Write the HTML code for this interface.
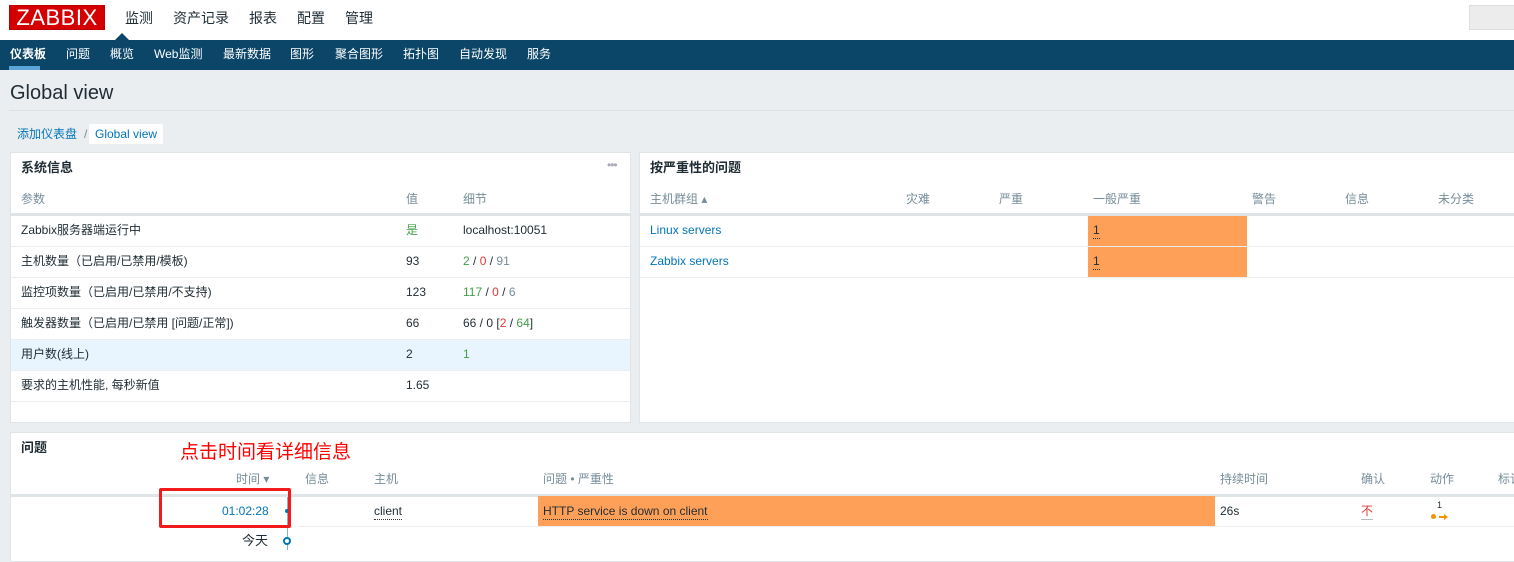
<!DOCTYPE html>
<html><head><meta charset="utf-8"><style>
*{margin:0;padding:0;box-sizing:border-box}
body{width:1514px;height:550px;overflow:hidden;background:#ebeef0;font-family:"Liberation Sans","Noto Sans CJK SC",sans-serif;font-size:12px;color:#1f2c33;position:relative}
.a{position:absolute;white-space:nowrap;line-height:16px}
.hdr{left:0;top:0;width:1514px;height:40px;background:#fff}
.nav{left:0;top:40px;width:1514px;height:30px;background:#0b4568}
.w{background:#fff;border:1px solid #dfe4e7}
.g{color:#768d99}
.l{color:#0275b8}
.hl{height:1px;background:#ebeef0}
.hl2{height:3px;background:#dfe4e7}
.grn{color:#429e47}.red{color:#e33734}
.or{background:#ffa059}
</style></head><body>
<div class="a hdr"></div>
<div class="a" style="left:9px;top:5px;width:96px;height:25px;background:#d40000;border:1px solid #b00;color:#fff;font-size:22px;line-height:24px;text-align:center;letter-spacing:0.5px">ZABBIX</div>
<div class="a" style="left:125px;top:10px;font-size:14px;color:#1f2c33">监测</div>
<div class="a" style="left:173px;top:10px;font-size:14px;color:#1f2c33">资产记录</div>
<div class="a" style="left:249px;top:10px;font-size:14px;color:#1f2c33">报表</div>
<div class="a" style="left:297px;top:10px;font-size:14px;color:#1f2c33">配置</div>
<div class="a" style="left:345px;top:10px;font-size:14px;color:#1f2c33">管理</div>
<div class="a" style="left:115px;top:33px;width:0;height:0;border-left:7px solid transparent;border-right:7px solid transparent;border-bottom:7px solid #0b4568"></div>
<div class="a" style="left:1469px;top:5px;width:50px;height:25px;background:#ececec;border:1px solid #ddd"></div>
<div class="a nav"></div>
<div class="a" style="left:10px;top:46px;color:#fff;font-weight:bold">仪表板</div>
<div class="a" style="left:9px;top:66px;width:31px;height:4px;background:#5ca4d8"></div>
<div class="a" style="left:66px;top:46px;color:#fff">问题</div>
<div class="a" style="left:110px;top:46px;color:#fff">概览</div>
<div class="a" style="left:154px;top:46px;color:#fff">Web监测</div>
<div class="a" style="left:223px;top:46px;color:#fff">最新数据</div>
<div class="a" style="left:290px;top:46px;color:#fff">图形</div>
<div class="a" style="left:335px;top:46px;color:#fff">聚合图形</div>
<div class="a" style="left:403px;top:46px;color:#fff">拓扑图</div>
<div class="a" style="left:459px;top:46px;color:#fff">自动发现</div>
<div class="a" style="left:527px;top:46px;color:#fff">服务</div>
<div class="a" style="left:10px;top:82px;font-size:20px;line-height:22px;color:#1f2c33">Global view</div>
<div class="a" style="left:9px;top:110px;width:1505px;height:1px;background:#dde1e3"></div>
<div class="a l" style="left:17px;top:126px">添加仪表盘</div>
<div class="a" style="left:84px;top:126px;color:#768d99">/</div>
<div class="a l" style="left:89px;top:124px;background:#fff;padding:2px 6px;border-radius:2px">Global view</div>

<div class="a w" style="left:10px;top:152px;width:621px;height:271px"></div>
<div class="a" style="left:21px;top:160px;font-weight:bold;font-size:13px">系统信息</div>
<div class="a" style="left:607px;top:157px;color:#aab;font-size:12px;letter-spacing:-1px">•••</div>
<div class="a g" style="left:21px;top:191px">参数</div>
<div class="a g" style="left:406px;top:191px">值</div>
<div class="a g" style="left:463px;top:191px">细节</div>
<div class="a hl2" style="left:11px;top:213px;width:619px"></div>
<div class="a" style="left:11px;top:339px;width:619px;height:31px;background:#e8f5ff"></div>
<div class="a hl" style="left:11px;top:246px;width:619px"></div>
<div class="a hl" style="left:11px;top:277px;width:619px"></div>
<div class="a hl" style="left:11px;top:308px;width:619px"></div>
<div class="a hl" style="left:11px;top:339px;width:619px"></div>
<div class="a hl" style="left:11px;top:370px;width:619px"></div>
<div class="a hl" style="left:11px;top:401px;width:619px"></div>
<div class="a" style="left:21px;top:222px">Zabbix服务器端运行中</div><div class="a grn" style="left:406px;top:222px">是</div><div class="a" style="left:463px;top:222px">localhost:10051</div>
<div class="a" style="left:21px;top:253px">主机数量（已启用/已禁用/模板)</div><div class="a" style="left:406px;top:253px">93</div><div class="a" style="left:463px;top:253px"><span class="grn">2</span> / <span class="red">0</span> / <span class="g">91</span></div>
<div class="a" style="left:21px;top:284px">监控项数量（已启用/已禁用/不支持)</div><div class="a" style="left:406px;top:284px">123</div><div class="a" style="left:463px;top:284px"><span class="grn">117</span> / <span class="red">0</span> / <span class="g">6</span></div>
<div class="a" style="left:21px;top:315px">触发器数量（已启用/已禁用 [问题/正常])</div><div class="a" style="left:406px;top:315px">66</div><div class="a" style="left:463px;top:315px">66 / 0 [<span class="red">2</span> / <span class="grn">64</span>]</div>
<div class="a" style="left:21px;top:346px">用户数(线上)</div><div class="a" style="left:406px;top:346px">2</div><div class="a grn" style="left:463px;top:346px">1</div>
<div class="a" style="left:21px;top:377px">要求的主机性能, 每秒新值</div><div class="a" style="left:406px;top:377px">1.65</div>

<div class="a w" style="left:639px;top:152px;width:880px;height:271px"></div>
<div class="a" style="left:650px;top:160px;font-weight:bold;font-size:13px">按严重性的问题</div>
<div class="a g" style="left:650px;top:191px">主机群组 ▴</div>
<div class="a g" style="left:906px;top:191px">灾难</div>
<div class="a g" style="left:999px;top:191px">严重</div>
<div class="a g" style="left:1093px;top:191px">一般严重</div>
<div class="a g" style="left:1252px;top:191px">警告</div>
<div class="a g" style="left:1345px;top:191px">信息</div>
<div class="a g" style="left:1438px;top:191px">未分类</div>
<div class="a hl2" style="left:640px;top:213px;width:874px"></div>
<div class="a or" style="left:1088px;top:216px;width:159px;height:30px"></div>
<div class="a or" style="left:1088px;top:247px;width:159px;height:30px"></div>
<div class="a hl" style="left:640px;top:246px;width:874px"></div>
<div class="a hl" style="left:640px;top:277px;width:874px"></div>
<div class="a l" style="left:650px;top:222px">Linux servers</div>
<div class="a l" style="left:650px;top:253px">Zabbix servers</div>
<div class="a" style="left:1093px;top:222px;border-bottom:1px dotted #333">1</div>
<div class="a" style="left:1093px;top:253px;border-bottom:1px dotted #333">1</div>

<div class="a w" style="left:10px;top:432px;width:1510px;height:130px"></div>
<div class="a" style="left:21px;top:440px;font-weight:bold;font-size:13px">问题</div>
<div class="a" style="left:180px;top:441px;font-size:19px;line-height:24px;color:#f00">点击时间看详细信息</div>
<div class="a g" style="left:236px;top:471px">时间 ▾</div>
<div class="a g" style="left:305px;top:471px">信息</div>
<div class="a g" style="left:374px;top:471px">主机</div>
<div class="a g" style="left:543px;top:471px">问题 • 严重性</div>
<div class="a g" style="left:1220px;top:471px">持续时间</div>
<div class="a g" style="left:1361px;top:471px">确认</div>
<div class="a g" style="left:1430px;top:471px">动作</div>
<div class="a g" style="left:1498px;top:471px">标记</div>
<div class="a hl2" style="left:11px;top:494px;width:1503px"></div>
<div class="a hl" style="left:298px;top:526px;width:1216px"></div>
<div class="a or" style="left:538px;top:496px;width:677px;height:30px"></div>
<div class="a" style="left:287px;top:497px;width:1px;height:53px;background:#7cb4dc"></div>
<div class="a" style="left:285px;top:509px;width:4px;height:4px;border-radius:2px;background:#0275b8"></div>
<div class="a" style="left:283px;top:537px;width:8px;height:8px;border-radius:4px;border:2px solid #0275b8;background:#fff"></div>
<div class="a l" style="left:222px;top:503px">01:02:28</div>
<div class="a" style="left:374px;top:503px;border-bottom:1px dotted #333">client</div>
<div class="a" style="left:543px;top:503px;border-bottom:1px dotted #333">HTTP service is down on client</div>
<div class="a" style="left:1220px;top:503px">26s</div>
<div class="a red" style="left:1361px;top:503px;border-bottom:1px solid #bbb">不</div>
<div class="a" style="left:1437px;top:500px;font-size:9px;line-height:10px">1</div>
<div class="a" style="left:1431px;top:514px;width:5px;height:5px;border-radius:3px;background:#f29400"></div>
<div class="a" style="left:1439px;top:516px;width:6px;height:2px;background:#f29400"></div>
<div class="a" style="left:1444px;top:514px;width:0;height:0;border-top:3px solid transparent;border-bottom:3px solid transparent;border-left:4px solid #f29400"></div>
<div class="a" style="left:242px;top:533px;font-size:13px">今天</div>
<div class="a" style="left:159px;top:488px;width:132px;height:40px;border:3px solid #f21b1b;border-radius:2px"></div>
</body></html>
